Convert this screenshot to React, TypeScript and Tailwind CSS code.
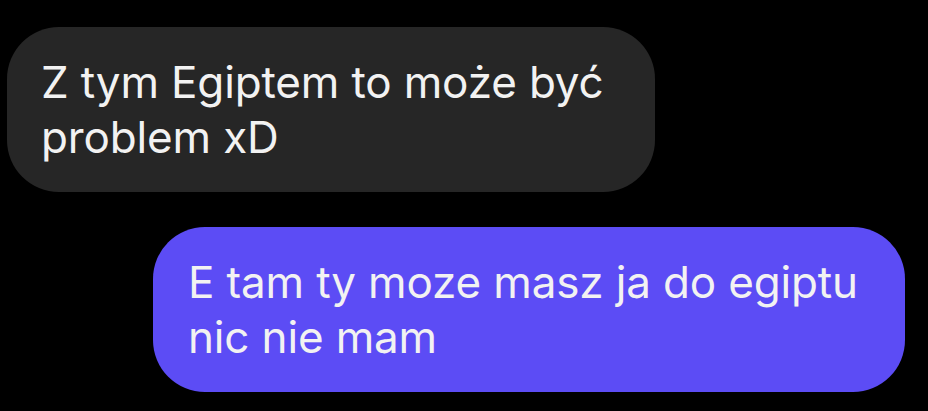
export default function App() {
  return (
    <div
      className="w-[928px] h-[411px] bg-black flex flex-col gap-[35px] pt-[27px] overflow-hidden text-[#f2f2f2]"
      style={{ fontFamily: "Inter, 'Noto Sans', sans-serif" }}
    >
      <div className="ml-[7px] w-[648px] h-[165px] rounded-[52px] bg-[#262626] pl-[34px] pr-[30px] flex items-center">
        <p className="text-[44px] leading-[55px] tracking-[-0.15px]">Z tym Egiptem to może być problem xD</p>
      </div>
      <div className="ml-[153px] w-[752px] h-[165px] rounded-[52px] bg-[#5c4cf5] pl-[35px] pr-[40px] flex items-center">
        <p className="text-[44px] leading-[55px] tracking-[-0.15px]">E tam ty moze masz ja do egiptu nic nie mam</p>
      </div>
    </div>
  );
}
